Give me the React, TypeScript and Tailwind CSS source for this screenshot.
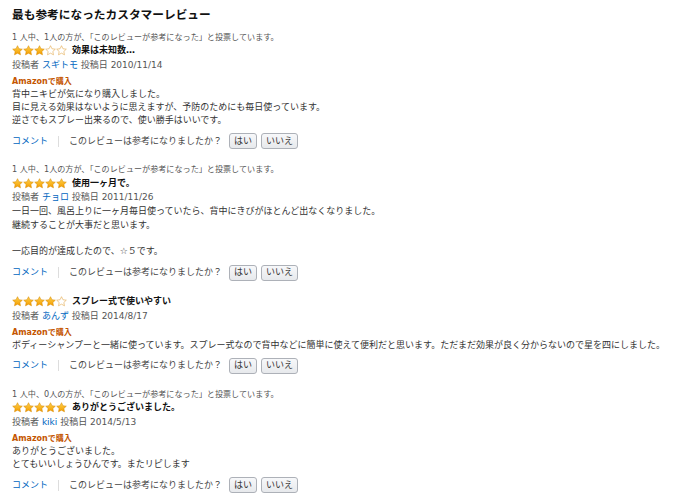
import React from 'react'

type Review = {
  count?: string
  rating: number
  title: string
  author: string
  date: string
  verified: boolean
  body: string[]
}

const reviews: Review[] = [
  {
    count: '1 人中、1人の方が、「このレビューが参考になった」と投票しています。',
    rating: 3,
    title: '効果は未知数…',
    author: 'スギトモ',
    date: '2010/11/14',
    verified: true,
    body: [
      '背中ニキビが気になり購入しました。',
      '目に見える効果はないように思えますが、予防のためにも毎日使っています。',
      '逆さでもスプレー出来るので、使い勝手はいいです。',
    ],
  },
  {
    count: '1 人中、1人の方が、「このレビューが参考になった」と投票しています。',
    rating: 5,
    title: '使用一ヶ月で。',
    author: 'チョロ',
    date: '2011/11/26',
    verified: false,
    body: [
      '一日一回、風呂上りに一ヶ月毎日使っていたら、背中にきびがほとんど出なくなりました。',
      '継続することが大事だと思います。',
      '',
      '一応目的が達成したので、☆５です。',
    ],
  },
  {
    rating: 4,
    title: 'スプレー式で使いやすい',
    author: 'あんず',
    date: '2014/8/17',
    verified: true,
    body: [
      'ボディーシャンプーと一緒に使っています。スプレー式なので背中などに簡単に使えて便利だと思います。ただまだ効果が良く分からないので星を四にしました。',
    ],
  },
  {
    count: '1 人中、0人の方が、「このレビューが参考になった」と投票しています。',
    rating: 5,
    title: 'ありがとうございました。',
    author: 'kiki',
    date: '2014/5/13',
    verified: true,
    body: ['ありがとうございました。', 'とてもいいしょうひんです。またリピします'],
  },
]

const STAR = '12,1.5 15.2,8.2 22.5,9.1 17.1,14.1 18.5,21.4 12,17.8 5.5,21.4 6.9,14.1 1.5,9.1 8.8,8.2'

function Stars({ rating }: { rating: number }) {
  return (
    <div className="flex">
      <svg width="0" height="0" className="absolute">
        <defs>
          <linearGradient id="starfill" x1="0" y1="0" x2="0" y2="1">
            <stop offset="0" stopColor="#ffd24a" />
            <stop offset="1" stopColor="#f39c00" />
          </linearGradient>
        </defs>
      </svg>
      {[0, 1, 2, 3, 4].map((i) => (
        <svg key={i} viewBox="0 0 24 24" className="w-[11px] h-[11px]">
          {i < rating ? (
            <polygon points={STAR} fill="url(#starfill)" stroke="#d98a00" strokeWidth="1.2" strokeLinejoin="round" />
          ) : (
            <polygon points={STAR} fill="#fff" stroke="#e2a848" strokeWidth="1.3" strokeLinejoin="round" />
          )}
        </svg>
      ))}
    </div>
  )
}

function VoteButton({ label }: { label: string }) {
  return (
    <span className="h-[16px] px-[4px] flex items-center border border-[#adb1b8] rounded-[3px] bg-gradient-to-b from-[#f7f8fa] to-[#e7e9ec] text-[9px] text-[#333] leading-none">
      {label}
    </span>
  )
}

function ReviewItem({ r }: { r: Review }) {
  return (
    <div className="mb-[13px]">
      {r.count && <div className="h-[13px] leading-[13px] text-[8.1px] text-[#555] whitespace-nowrap">{r.count}</div>}
      <div className="h-[14px] flex items-center gap-[5px]">
        <Stars rating={r.rating} />
        <span className="text-[9px] font-bold text-[#111] leading-none">{r.title}</span>
      </div>
      <div className="h-[15px] leading-[15px] text-[9px] text-[#555]">
        投稿者 <span className="text-[#0066c0]">{r.author}</span> 投稿日 {r.date}
      </div>
      {r.verified && (
        <div className="mt-[3px] h-[12px] leading-[12px] text-[8px] font-bold text-[#c45500]">Amazonで購入</div>
      )}
      <div className="text-[9px] leading-[13.3px] text-[#333]">
        {r.body.map((line, i) => (
          <div key={i} className="h-[13.3px] whitespace-nowrap">
            {line}
          </div>
        ))}
      </div>
      <div className="mt-[5px] h-[18px] flex items-center text-[9px] text-[#333]">
        <span className="text-[#0066c0]">コメント</span>
        <span className="mx-[10px] w-px h-[11px] bg-[#ddd]" />
        <span className="text-[#444]">このレビューは参考になりましたか？</span>
        <div className="ml-[7px] flex gap-[4px]">
          <VoteButton label="はい" />
          <VoteButton label="いいえ" />
        </div>
      </div>
    </div>
  )
}

export default function App() {
  return (
    <div
      className="w-[680px] h-[504px] bg-white px-[12px] pt-[7px] overflow-hidden"
      style={{ fontFamily: '"DejaVu Sans", "Noto Sans CJK JP", sans-serif' }}
    >
      <h2 className="text-[11.7px] font-bold leading-[16px] text-[#111]">最も参考になったカスタマーレビュー</h2>
      <div className="mt-[7.5px]">
        {reviews.map((r, i) => (
          <ReviewItem key={i} r={r} />
        ))}
      </div>
    </div>
  )
}
